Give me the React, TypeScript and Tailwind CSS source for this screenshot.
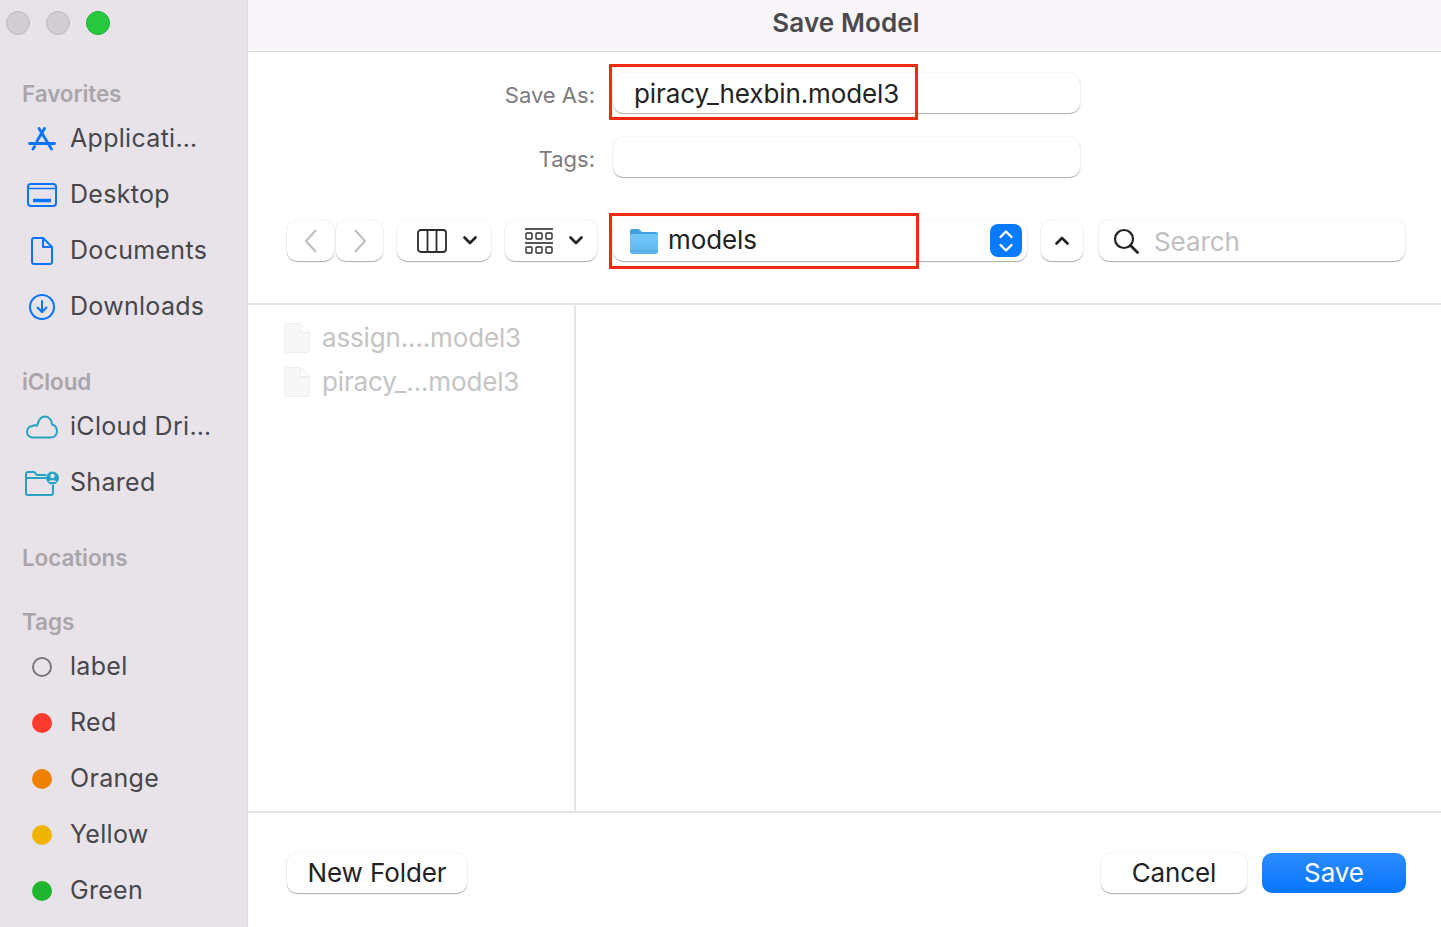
import type { ReactNode } from 'react'

const fieldShadow = 'shadow-[0_1px_1px_rgba(0,0,0,0.3),0_0_0_1px_rgba(0,0,0,0.03)]'

function AppsIcon() {
  return (
    <svg width="30" height="28" viewBox="0 0 30 28" fill="none" stroke="#0a74ff" strokeWidth="2.800" strokeLinecap="round">
      <path d="M12 3.500L24.500 24" />
      <path d="M17.500 3.500L10 16" />
      <path d="M2.500 18.500h25" />
      <path d="M7.500 21.500l-1.500 2.500" />
    </svg>
  )
}

function DesktopIcon() {
  return (
    <svg width="30" height="24" viewBox="0 0 30 24" fill="none" stroke="#0a74ff" strokeWidth="2">
      <rect x="1" y="1" width="28" height="22" rx="3" />
      <path d="M1 5.500h28" strokeWidth="1.500" />
      <path d="M6 17.500h18" strokeWidth="3.500" />
    </svg>
  )
}

function DocumentIcon() {
  return (
    <svg width="22" height="28" viewBox="0 0 22 28" fill="none" stroke="#0a74ff" strokeWidth="2" strokeLinejoin="round">
      <path d="M3 1h9l9 9v15a2 2 0 0 1-2 2H3a2 2 0 0 1-2-2V3a2 2 0 0 1 2-2z" />
      <path d="M12 1v9h9" />
    </svg>
  )
}

function DownloadIcon() {
  return (
    <svg width="26" height="26" viewBox="0 0 26 26" fill="none" stroke="#0a74ff" strokeWidth="2" strokeLinecap="round" strokeLinejoin="round">
      <circle cx="13" cy="13" r="12" />
      <path d="M13 7v11" />
      <path d="M8.500 13.500L13 18l4.500-4.500" />
    </svg>
  )
}

function CloudIcon() {
  return (
    <svg width="32" height="24" viewBox="0 0 32 24" fill="none" stroke="#27a3c2" strokeWidth="2" strokeLinejoin="round">
      <path d="M7 22.500C3.500 22.500 1 20 1 17c0-3 2-5.500 5.500-6 1.500-.8 3-.8 4.500-.3C12.500 5 15.500 1.500 19 1.500c4 0 7 3.500 7 8 3 .8 5 3.500 5 6.700 0 3.500-2.500 6.300-6 6.300z" />
    </svg>
  )
}

function SharedIcon() {
  return (
    <svg width="34" height="25" viewBox="0 0 34 25" fill="none" stroke="#27a3c2" strokeWidth="2">
      <path d="M21 7H1V3a2 2 0 0 1 2-2h6l3 3h9" strokeLinejoin="round" />
      <path d="M1 7v15a2 2 0 0 0 2 2h23a2 2 0 0 0 2-2V14" />
      <circle cx="27.500" cy="7" r="6.500" fill="#27a3c2" stroke="none" />
      <circle cx="27.500" cy="5" r="2.200" fill="#e7e3e8" stroke="none" />
      <path d="M23.500 11c.5-2.500 7.500-2.500 8 0z" fill="#e7e3e8" stroke="none" />
    </svg>
  )
}

function ColumnsIcon() {
  return (
    <svg width="30" height="24" viewBox="0 0 30 24" fill="none" stroke="#2b2b2b" strokeWidth="1.800">
      <rect x="1" y="1" width="28" height="22" rx="3" />
      <path d="M10.500 1v22" />
      <path d="M19.500 1v22" />
    </svg>
  )
}

function GalleryIcon() {
  return (
    <svg width="28" height="26" viewBox="0 0 28 26" fill="none" stroke="#2b2b2b">
      <path d="M0 1h28" strokeWidth="1.600" />
      <path d="M0 15h28" strokeWidth="1.600" />
      <rect x="1" y="5" width="6" height="6" rx="1" strokeWidth="1.400" />
      <rect x="11" y="5" width="6" height="6" rx="1" strokeWidth="1.400" />
      <rect x="21" y="5" width="6" height="6" rx="1" strokeWidth="1.400" />
      <rect x="1" y="19" width="6" height="6" rx="1" strokeWidth="1.400" />
      <rect x="11" y="19" width="6" height="6" rx="1" strokeWidth="1.400" />
      <rect x="21" y="19" width="6" height="6" rx="1" strokeWidth="1.400" />
    </svg>
  )
}

function Chevron({ up = false }: { up?: boolean }) {
  return (
    <svg width="14" height="9" viewBox="0 0 14 9" fill="none" stroke="#222" strokeWidth="2.600" strokeLinecap="round" strokeLinejoin="round">
      <path d={up ? 'M1.500 7.500L7 2l5.500 5.500' : 'M1.500 1.500L7 7l5.500-5.500'} />
    </svg>
  )
}

function FolderIcon() {
  return (
    <svg width="30" height="28" viewBox="0 0 30 28" fill="none">
      <defs>
        <linearGradient id="folderFront" x1="0" y1="0" x2="0" y2="1">
          <stop offset="0" stopColor="#74c9fb" />
          <stop offset="1" stopColor="#5db5ee" />
        </linearGradient>
      </defs>
      <path d="M1 4a2 2 0 0 1 2-2h7l3 3h14a2 2 0 0 1 2 2v4H1z" fill="#3f9fdf" />
      <rect x="1" y="7" width="28" height="20" rx="2" fill="url(#folderFront)" />
      <path d="M1 24h28" stroke="#4fa6dd" strokeWidth="1" />
    </svg>
  )
}

function FileIcon() {
  return (
    <svg width="26" height="30" viewBox="0 0 26 30" fill="none">
      <path d="M2.500.500h14l9 9v18a2 2 0 0 1-2 2h-21a2 2 0 0 1-2-2v-25a2 2 0 0 1 2-2z" fill="#f7f7f7" stroke="#efefef" />
      <path d="M16.500.500v9h9z" fill="#fff" stroke="#ececec" />
    </svg>
  )
}

function SearchIcon() {
  return (
    <svg width="26" height="26" viewBox="0 0 26 26" fill="none" stroke="#222" strokeWidth="2.200" strokeLinecap="round">
      <circle cx="11" cy="11" r="9" />
      <path d="M17.500 17.500l7 7" strokeWidth="2.800" />
    </svg>
  )
}

function SectionTitle({ children, className }: { children: ReactNode; className: string }) {
  return (
    <div className={`flex h-[30px] items-center pl-[22px] text-[22.500px] font-semibold tracking-[-0.1px] text-[#a9a6ab] ${className}`}>
      {children}
    </div>
  )
}

function SideItem({ icon, label }: { icon: ReactNode; label: string }) {
  return (
    <div className="flex h-14 items-center text-[25px] tracking-[0.3px] text-[#48464b]">
      <div className="flex w-[70px] shrink-0 justify-center pl-3.5">{icon}</div>
      <span>{label}</span>
    </div>
  )
}

function TagDot({ color }: { color: string }) {
  return <div className={`h-5 w-5 rounded-full ${color}`} />
}

function Sidebar() {
  return (
    <aside className="h-full w-[248px] shrink-0 overflow-hidden border-r border-[#dcd8dd] bg-[#e7e3e8] pt-[11px]">
      <div className="flex gap-4 pl-1.5">
        <div className="h-6 w-6 rounded-full border border-[#bdb9bd] bg-[#d1cdd1]" />
        <div className="h-6 w-6 rounded-full border border-[#bdb9bd] bg-[#d1cdd1]" />
        <div className="h-6 w-6 rounded-full border border-[#20ad35] bg-[#28c83f]" />
      </div>
      <SectionTitle className="mt-11 mb-0.5">Favorites</SectionTitle>
      <SideItem icon={<AppsIcon />} label="Applicati…" />
      <SideItem icon={<DesktopIcon />} label="Desktop" />
      <SideItem icon={<DocumentIcon />} label="Documents" />
      <SideItem icon={<DownloadIcon />} label="Downloads" />
      <SectionTitle className="mt-8 mb-0.5">iCloud</SectionTitle>
      <SideItem icon={<CloudIcon />} label="iCloud Dri…" />
      <SideItem icon={<SharedIcon />} label="Shared" />
      <SectionTitle className="mt-8">Locations</SectionTitle>
      <SectionTitle className="mt-[34px] mb-0.5">Tags</SectionTitle>
      <SideItem icon={<div className="h-5 w-5 rounded-full border-2 border-[#77757a]" />} label="label" />
      <SideItem icon={<TagDot color="bg-[#ff3b30]" />} label="Red" />
      <SideItem icon={<TagDot color="bg-[#f08000]" />} label="Orange" />
      <SideItem icon={<TagDot color="bg-[#eeb400]" />} label="Yellow" />
      <SideItem icon={<TagDot color="bg-[#1fb52f]" />} label="Green" />
    </aside>
  )
}

function FormRow({ label, value, className }: { label: string; value?: string; className?: string }) {
  return (
    <div className={`flex items-center ${className ?? ''}`}>
      <div className="w-[347px] pt-1 text-right text-[22px] text-[#7d7b7e]">{label}</div>
      <div className={`ml-[18px] flex h-10 w-[467px] items-center rounded-[10px] bg-white pl-[21px] text-[26px] tracking-[-0.1px] text-[#222] ${fieldShadow}`}>
        {value}
      </div>
    </div>
  )
}

function ToolButton({ children, className }: { children: ReactNode; className: string }) {
  return (
    <div className={`flex h-[41px] items-center rounded-[10px] bg-white ${fieldShadow} ${className}`}>{children}</div>
  )
}

function Toolbar() {
  return (
    <div className="mt-[43px] flex pl-[39px]">
      <ToolButton className="w-[47px] justify-center">
        <svg width="16" height="26" viewBox="0 0 16 26" fill="none" stroke="#bdbdbd" strokeWidth="2">
          <path d="M13 2L3 13l10 11" />
        </svg>
      </ToolButton>
      <ToolButton className="ml-0.5 w-[47px] justify-center">
        <svg width="16" height="26" viewBox="0 0 16 26" fill="none" stroke="#bdbdbd" strokeWidth="2">
          <path d="M3 2l10 11L3 24" />
        </svg>
      </ToolButton>
      <ToolButton className="ml-3.5 w-[94px] justify-between pr-3.5 pl-5">
        <ColumnsIcon />
        <Chevron />
      </ToolButton>
      <ToolButton className="ml-3.5 w-[92px] justify-between pr-3.5 pl-5">
        <GalleryIcon />
        <Chevron />
      </ToolButton>
      <ToolButton className="ml-4 w-[414px] pr-[5px] pl-4">
        <FolderIcon />
        <span className="ml-[9px] pb-0.5 text-[26px] tracking-[-0.1px] text-[#222]">models</span>
        <div className="ml-auto flex h-[33px] w-8 items-center justify-center rounded-lg bg-[#0a7bff]">
          <svg width="16" height="26" viewBox="0 0 16 26" fill="none" stroke="#fff" strokeWidth="2.400" strokeLinecap="round" strokeLinejoin="round">
            <path d="M2.500 9L8 3.500 13.500 9" />
            <path d="M2.500 17L8 22.500 13.500 17" />
          </svg>
        </div>
      </ToolButton>
      <ToolButton className="ml-3.5 w-[42px] justify-center">
        <Chevron up />
      </ToolButton>
      <ToolButton className="ml-4 w-[306px] pl-3.5">
        <SearchIcon />
        <span className="ml-[15px] pt-0.5 text-[26px] tracking-[-0.1px] text-[#c0c0c0]">Search</span>
      </ToolButton>
    </div>
  )
}

function FileRow({ name }: { name: string }) {
  return (
    <div className="flex h-11 items-center text-[26px] tracking-[-0.15px] text-[#c4c4c4]">
      <FileIcon />
      <span className="ml-3 pb-px">{name}</span>
    </div>
  )
}

function DialogButton({ children, className }: { children: ReactNode; className: string }) {
  return (
    <button type="button" className={`flex h-10 items-center justify-center rounded-[10px] pb-0.5 text-[26px] tracking-[-0.1px] ${className}`}>
      {children}
    </button>
  )
}

export default function App() {
  return (
    <div className="relative flex h-[927px] w-[1441px] overflow-hidden bg-white font-['Inter',sans-serif]">
      <Sidebar />
      <main className="flex h-full min-w-0 flex-1 flex-col">
        <header className="flex h-[52px] shrink-0 items-center justify-center border-b border-[#dedbdf] bg-[#f9f6fa] pb-1.5 pl-[3px] text-[26px] font-semibold tracking-[0.1px] text-[#4b494c]">
          Save Model
        </header>
        <FormRow label="Save As:" value="piracy_hexbin.model3" className="mt-[21px]" />
        <FormRow label="Tags:" className="mt-6" />
        <Toolbar />
        <section className="mt-[42px] flex min-h-0 flex-1 border-t-2 border-b-2 border-[#e5e5e5]">
          <div className="w-[328px] border-r-2 border-[#e5e5e5] pt-[11px] pl-9">
            <FileRow name="assign....model3" />
            <FileRow name="piracy_...model3" />
          </div>
        </section>
        <footer className="flex h-[114px] shrink-0 items-start pt-10 pl-[39px]">
          <DialogButton className={`w-[180px] bg-white text-[#222] ${fieldShadow}`}>New Folder</DialogButton>
          <DialogButton className={`ml-auto w-[146px] bg-white text-[#222] ${fieldShadow}`}>Cancel</DialogButton>
          <DialogButton className="mr-[35px] ml-[15px] w-[144px] bg-gradient-to-b from-[#2a8cff] to-[#0476ff] text-white">
            Save
          </DialogButton>
        </footer>
      </main>
      <div className="pointer-events-none absolute top-16 left-[609px] h-[56px] w-[309px] border-[3px] border-[#f5290f]" />
      <div className="pointer-events-none absolute top-[213px] left-[609px] h-[56px] w-[310px] border-[3px] border-[#f5290f]" />
    </div>
  )
}
